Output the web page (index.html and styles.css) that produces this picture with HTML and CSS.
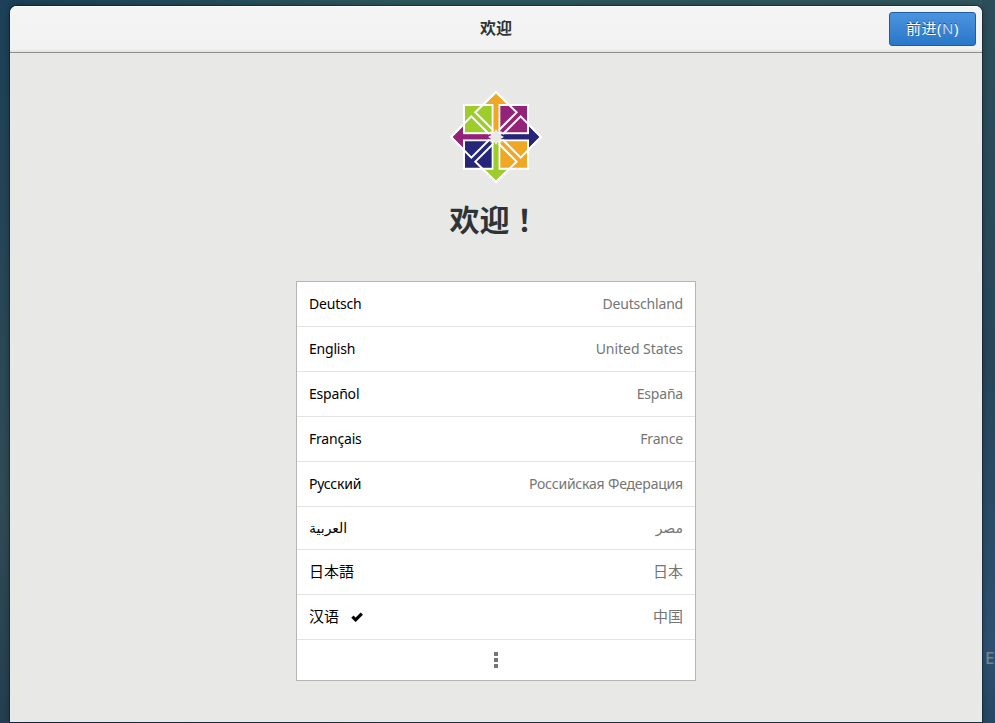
FILE: index.html
```html
<!DOCTYPE html>
<html lang="zh-CN">
<head>
<meta charset="utf-8">
<title>欢迎</title>
<link rel="stylesheet" href="styles.css">
</head>
<body>
<span class="behind">E</span>
<div class="window">
  <header class="bar">
    <h1 class="title">欢迎</h1>
    <button class="next">前进(<span>N</span>)</button>
  </header>
  <main class="page">
    <svg class="logo" viewBox="0 0 336 336">
      <g stroke="#fff" stroke-width="6">
        <path fill="#efa724" d="M168 36 230 97 168 171 106 97Z"/>
        <path fill="#262577" d="M303 171 242 233 168 171 242 109Z"/>
        <path fill="#9ccd2a" d="M168 306 106 245 168 171 230 245Z"/>
        <path fill="#932279" d="M33 171 94 109 168 171 94 233Z"/>
        <path fill="#9ccd2a" d="M72 75H158V160H72Z"/>
        <path fill="#932279" d="M178 75H264V160H178Z"/>
        <path fill="#262577" d="M72 181H158V266H72Z"/>
        <path fill="#efa724" d="M178 181H264V266H178Z"/>
      </g>
      <path fill="#efa724" d="M161 70H175V146L168 154 161 146Z"/>
      <path fill="#9ccd2a" d="M161 272H175V196L168 188 161 196Z"/>
      <path fill="#932279" d="M67 164V178H143L150 171 143 164Z"/>
      <path fill="#262577" d="M269 164V178H193L186 171 193 164Z"/>
      <path fill="none" stroke="#fff" stroke-width="6" d="M159 150 106 97 168 36 230 97 177 150M159 192 106 245 168 306 230 245 177 192M147 162 94 109 33 171 94 233 147 180M189 162 242 109 303 171 242 233 189 180"/>
      <path fill="#e8e8e6" stroke="#fff" stroke-width="2" d="M168 149 174 159 184 155 180 165 190 171 180 177 184 187 174 183 168 193 162 183 152 187 156 177 146 171 156 165 152 155 162 159Z"/>
    </svg>
    <h2 class="welcome">欢迎<span lang="zh-TW">！</span></h2>
    <ul class="list">
      <li><span>Deutsch</span><span class="country">Deutschland</span></li>
      <li><span>English</span><span class="country wide">United States</span></li>
      <li><span>Español</span><span class="country">España</span></li>
      <li><span>Français</span><span class="country">France</span></li>
      <li><span>Русский</span><span class="country">Российская Федерация</span></li>
      <li class="arabic"><span>العربية</span><span class="country">مصر</span></li>
      <li class="cjk" lang="ja"><span>日本語</span><span class="country">日本</span></li>
      <li class="cjk"><span>汉语</span><svg class="check" viewBox="0 0 12 10"><path d="M1.4 4.6 4.6 7.8 10.8 1.6" fill="none" stroke="#000" stroke-width="3.2"/></svg><span class="country">中国</span></li>
      <li class="more"><i></i><i></i><i></i></li>
    </ul>
  </main>
</div>
</body>
</html>
```
FILE: styles.css
```css
* { box-sizing: border-box; margin: 0; padding: 0; }
body {
  width: 995px;
  height: 723px;
  overflow: hidden;
  padding: 6px 13px 1px 10px;
  background:
    linear-gradient(to bottom, #2c4e59, #28455a 50%, #2d5070 90%, #264863) right / 13px 100% no-repeat,
    linear-gradient(to bottom, #1c4057, #304b55 70%, #243e50) left / 10px 100% no-repeat,
    linear-gradient(to right, #1c4057, #2d575c 40%, #30555c);
  font: 14px/20px "Noto Sans", "Noto Sans CJK SC", sans-serif;
}
.behind { position: absolute; left: 985px; top: 648px; color: #75838c; font-size: 17px; font-weight: 500; }
.window {
  height: 716px;
  background: #e8e8e6;
  border-radius: 7px 7px 0 0;
  box-shadow: 0 0 0 1px rgba(0,10,25,.35), 0 0 6px rgba(0,0,0,.35);
}
.bar {
  height: 47px;
  display: grid;
  grid-template-columns: 1fr auto 1fr;
  align-items: center;
  padding: 0 6px 1px;
  background: linear-gradient(#f4f4f4, #f2f2f2 43px, #e2e2e0 46px);
  border-bottom: 1px solid #8f8f8a;
  border-radius: 7px 7px 0 0;
  box-shadow: inset 0 1px #fff;
}
.title { grid-column: 2; padding-bottom: 2px; font-size: 16px; line-height: 20px; color: #2e3436; font-weight: 700; }
.next {
  justify-self: end;
  width: 87px;
  height: 34px;
  padding-bottom: 2px;
  border: 1px solid #1c5da5;
  border-radius: 3px;
  background: linear-gradient(#4b94df, #2a76c8);
  color: #fff;
  font: 15px/20px "Noto Sans", "Noto Sans CJK SC", sans-serif;
  letter-spacing: .5px;
  text-shadow: 0 -1px rgba(0,20,60,.5);
}
.next span { color: #c3dcf5; }
.page { display: flex; flex-direction: column; align-items: center; padding-top: 27px; }
.logo { width: 112px; height: 112px; display: block; }
.welcome { margin-top: 6px; height: 44px; padding-right: 3px; font-size: 30px; line-height: 44px; color: #2e3436; }
.welcome span { font-family: "Noto Sans CJK TC", sans-serif; line-height: 1; }
.list { width: 400px; height: 400px; margin-top: 39px; border: 1px solid #b6b6b3; background: #fff; list-style: none; }
.list li { height: 45px; padding: 0 12px; display: flex; align-items: center; border-bottom: 1px solid #e3e3e2; color: #000; letter-spacing: -.2px; }
.list .country { margin-left: auto; color: #757575; }
.list .wide { letter-spacing: -.05px; }
.list .arabic { height: 43px; font-family: "DejaVu Sans", sans-serif; letter-spacing: 0; }
.list .cjk { font-size: 15px; letter-spacing: 0; }
.cjk span { padding-bottom: 2px; }
.check { width: 12px; height: 10px; margin-left: 12px; }
.list .more { height: 41px; padding-bottom: 1px; border: 0; flex-direction: column; justify-content: center; gap: 2px; }
.more i { width: 4px; height: 4px; background: #757575; }
```
